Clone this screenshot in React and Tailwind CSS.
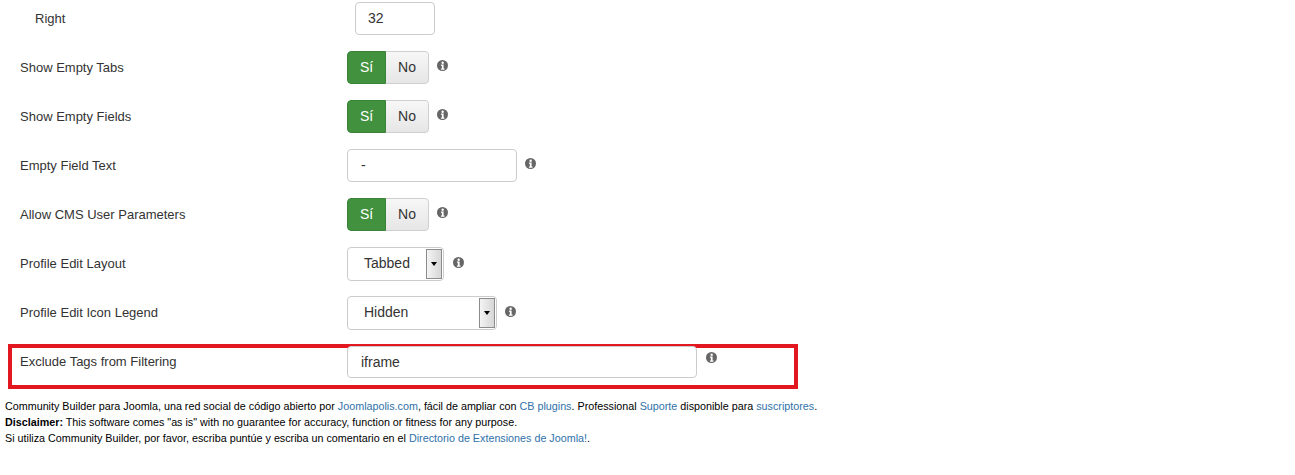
import React from "react";

function Info() {
  return (
    <svg width="11" height="11" viewBox="0 0 12 12" className="shrink-0">
      <circle cx="6" cy="6" r="6" fill="#666" />
      <circle cx="6.2" cy="3" r="1.3" fill="#fff" />
      <path d="M4.3 5h2.9v4.2h1v1.3H4.3V9.2h1V6.3h-1z" fill="#fff" />
    </svg>
  );
}

function Toggle() {
  return (
    <div className="flex h-[33px] w-[82px] rounded-[4px] overflow-hidden text-[14px]">
      <div className="w-[39px] flex items-center justify-center bg-[#41913f] text-white border border-[#3a8238] rounded-l-[4px]">
        Sí
      </div>
      <div className="flex-1 flex items-center justify-center bg-[linear-gradient(#f7f7f7,#e6e6e6)] text-[#333] border border-l-0 border-[#cfcfcf] rounded-r-[4px]">
        No
      </div>
    </div>
  );
}

function TextInput({ value, width, height = "h-[33px]", pl = "pl-[12px]" }) {
  return (
    <div
      className={`${width} ${height} ${pl} flex items-center bg-white border border-[#cccccc] rounded-[4px] text-[14px] text-[#333]`}
    >
      {value}
    </div>
  );
}

function Select({ value, width }) {
  return (
    <div
      className={`${width} h-[34px] flex items-center bg-white border border-[#cccccc] rounded-[4px] text-[14px] text-[#333] pl-[16px] pr-[1px]`}
    >
      <span className="flex-1">{value}</span>
      <div className="w-[16px] h-[30px] flex items-center justify-center border border-[#8c8c8c] bg-[linear-gradient(90deg,#f4f4f4,#d6d6d6)]">
        <div className="w-0 h-0 border-l-[3px] border-r-[3px] border-t-[4px] border-l-transparent border-r-transparent border-t-black" />
      </div>
    </div>
  );
}

function Row({ label, children, gap = "gap-[8px]" }) {
  return (
    <div className="flex items-center h-[49px]">
      <div className="w-[347px] pl-[20px] text-[13px] text-[#333]">{label}</div>
      <div className={`flex items-start ${gap}`}>{children}</div>
    </div>
  );
}

export default function App() {
  return (
    <div
      className="w-[1295px] h-[475px] bg-white overflow-hidden"
      style={{ fontFamily: '"Liberation Sans", Arial, sans-serif' }}
    >
      <div className="-mt-[6px]">
        <div className="flex items-center h-[49px]">
          <div className="w-[355px] pl-[35px] text-[13px] text-[#333]">Right</div>
          <TextInput value="32" width="w-[80px]" />
        </div>
        <Row label="Show Empty Tabs">
          <Toggle />
          <div className="pt-[9px]">
            <Info />
          </div>
        </Row>
        <Row label="Show Empty Fields">
          <Toggle />
          <div className="pt-[9px]">
            <Info />
          </div>
        </Row>
        <Row label="Empty Field Text">
          <TextInput value="-" width="w-[170px]" pl="pl-[13px]" />
          <div className="pt-[9px]">
            <Info />
          </div>
        </Row>
        <Row label="Allow CMS User Parameters">
          <Toggle />
          <div className="pt-[9px]">
            <Info />
          </div>
        </Row>
        <Row label="Profile Edit Layout" gap="gap-[9px]">
          <Select value="Tabbed" width="w-[97px]" />
          <div className="pt-[10px]">
            <Info />
          </div>
        </Row>
        <Row label="Profile Edit Icon Legend" gap="gap-[8px]">
          <Select value="Hidden" width="w-[150px]" />
          <div className="pt-[10px]">
            <Info />
          </div>
        </Row>
      </div>

      <div className="ml-[8px] mt-[7px] w-[790px] h-[45px] border-[4px] border-[#e3171f] flex items-start">
        <div className="w-[335px] pl-[8px] pt-[4px] text-[13px] text-[#333]">
          Exclude Tags from Filtering
        </div>
        <div className="flex items-start gap-[9px] -mt-[2px]">
          <TextInput value="iframe" width="w-[350px]" height="h-[32px]" pl="pl-[13px]" />
          <div className="pt-[6px]">
            <Info />
          </div>
        </div>
      </div>

      <div className="pl-[5px] pt-[9px] text-[10.75px] leading-[16px] text-black">
        <div>
          Community Builder para Joomla, una red social de código abierto por{" "}
          <span className="text-[#3071a9]">Joomlapolis.com</span>, fácil de ampliar con{" "}
          <span className="text-[#3071a9]">CB plugins</span>. Professional{" "}
          <span className="text-[#3071a9]">Suporte</span> disponible para{" "}
          <span className="text-[#3071a9]">suscriptores</span>.
        </div>
        <div>
          <b>Disclaimer:</b> This software comes "as is" with no guarantee for accuracy, function or
          fitness for any purpose.
        </div>
        <div>
          Si utiliza Community Builder, por favor, escriba puntúe y escriba un comentario en el{" "}
          <span className="text-[#3071a9]">Directorio de Extensiones de Joomla!</span>.
        </div>
      </div>
    </div>
  );
}
